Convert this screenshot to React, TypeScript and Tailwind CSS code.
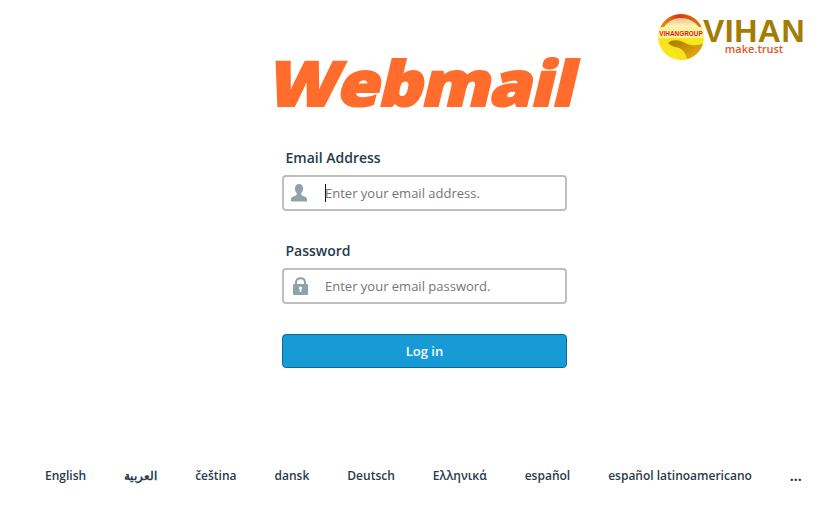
const languages = [
  "English",
  "العربية",
  "čeština",
  "dansk",
  "Deutsch",
  "Ελληνικά",
  "español",
  "español latinoamericano",
];

const UserIcon = () => (
  <svg width="16" height="18" viewBox="0 0 16 18" fill="currentColor" className="ml-[7px]">
    <path d="M8 0C10.600 0 12 1.800 12 4.500C12 6.500 11.200 8.200 10.300 9.200V10.800C10.300 11.500 13.500 12.300 15 13.200C15.700 13.600 16 14.300 16 15V17.500H0V15C0 14.300 0.300 13.600 1 13.200C2.500 12.300 5.700 11.500 5.700 10.800V9.200C4.800 8.200 4 6.500 4 4.500C4 1.800 5.400 0 8 0Z" />
  </svg>
);

const LockIcon = () => (
  <svg width="15" height="18" viewBox="0 0 15 18" className="ml-[9px]">
    <path d="M3 8V5.500C3 2.800 5 1.200 7.500 1.200C10 1.200 12 2.800 12 5.500V8" fill="none" stroke="currentColor" strokeWidth="2" />
    <rect x="0" y="7" width="15" height="11" rx="1" fill="currentColor" />
    <circle cx="7.500" cy="11" r="1.600" fill="#fff" />
    <rect x="6.700" y="11" width="1.600" height="4" fill="#fff" />
  </svg>
);

const VihanLogo = () => (
  <div className="absolute left-[658px] top-[14px] flex h-[46px] w-[150px] items-start">
    <svg width="46" height="46" viewBox="0 0 46 46" className="shrink-0">
      <defs>
        <linearGradient id="arc" x1="0" y1="0" x2="1" y2="0">
          <stop offset="0" stopColor="#e6a41c" />
          <stop offset="0.45" stopColor="#dc3514" />
          <stop offset="1" stopColor="#c98a10" />
        </linearGradient>
        <linearGradient id="cream" x1="0" y1="0" x2="0" y2="1">
          <stop offset="0" stopColor="#f0c08a" />
          <stop offset="1" stopColor="#fdf6c0" />
        </linearGradient>
        <linearGradient id="gold" x1="0" y1="0" x2="1" y2="1">
          <stop offset="0" stopColor="#a87a08" />
          <stop offset="0.6" stopColor="#d69a0c" />
          <stop offset="1" stopColor="#f0c414" />
        </linearGradient>
        <clipPath id="disc">
          <circle cx="23" cy="23" r="23" />
        </clipPath>
      </defs>
      <g clipPath="url(#disc)">
        <rect width="46" height="46" fill="#f8e71c" />
        <rect width="46" height="14" fill="url(#arc)" />
        <path d="M6 13C11 6 17 4 23 4C30 4 36 7 41 13Z" fill="url(#cream)" />
        <rect y="13" width="46" height="11" fill="#fdf39a" />
        <path d="M0 29C6 24 16 23 23 26C30 29 36 33 46 30V34C44 40 38 46 30 46H20C19 38 12 32 0 29Z" fill="#f8e21c" />
        <path d="M10 29C16 24 24 27 29 30C34 32 40 32 46 29C45 39 38 45 29 46C28 38 24 34 17 33C14 32 12 31 10 29Z" fill="url(#gold)" />
      </g>
      <text x="23" y="21.500" textAnchor="middle" fontFamily="Liberation Sans" fontWeight="700" fontSize="6.400" fill="#e0201c">
        VIHANGROUP
      </text>
    </svg>
    <div className="ml-[-1px] flex flex-col items-center">
      <span className="mt-[4px] whitespace-nowrap font-['Liberation_Sans',sans-serif] text-[32px] leading-[26px] font-bold tracking-[0.5px] text-[#a47c05]">
        VIHAN
      </span>
      <span className="font-['Open_Sans',sans-serif] text-[11px] leading-[10px] font-semibold text-[#e2571e]">
        make.trust
      </span>
    </div>
  </div>
);

const Field = ({
  label,
  placeholder,
  icon,
  caret,
}: {
  label: string;
  placeholder: string;
  icon: React.ReactNode;
  caret?: boolean;
}) => (
  <div className="flex flex-col">
    <label className="ml-[3.5px] h-[19px] text-[14px] leading-[19px] font-semibold text-[#293a4a]">
      {label}
    </label>
    <div className="mt-[8px] flex h-[36px] items-center rounded-[4px] border-2 border-[#bfbfbf] bg-white">
      <span className="flex w-[41px] shrink-0 text-[#8fa2aa]">{icon}</span>
      {caret && <span className="mr-[-1px] h-[18px] w-px bg-[#111]" />}
      <span className="pt-[1px] text-[13px] text-[#757575]">{placeholder}</span>
    </div>
  </div>
);

export default function App() {
  return (
    <div className="relative h-[509px] w-[833px] overflow-hidden bg-white font-['Open_Sans',sans-serif]">
      <VihanLogo />
      <div className="flex flex-col items-center pt-[37px] pl-[16px]">
        <div className="ml-[-1px] flex h-[90px] items-center">
          <span className="inline-block -skew-x-[12deg] scale-x-[1.11] text-[62px] leading-[90px] font-extrabold tracking-[-1px] text-[#ff6c2c] [-webkit-text-stroke:2px_#ff6c2c]">
            Webmail
          </span>
        </div>
        <form className="mt-[21px] flex w-[285px] flex-col">
          <Field label="Email Address" placeholder="Enter your email address." icon={<UserIcon />} caret />
          <div className="mt-[30px]">
            <Field label="Password" placeholder="Enter your email password." icon={<LockIcon />} />
          </div>
          <button
            type="button"
            className="mt-[30px] h-[34px] rounded-[4px] border border-[#0b6a94] bg-[#179bd7] pt-[1px] text-[13px] font-semibold text-white"
          >
            Log in
          </button>
        </form>
      </div>
      <div className="absolute bottom-[24px] left-[45px] flex items-center gap-[38px] text-[12px] leading-[18px] font-semibold text-[#293a4a]">
        {languages.map((name) => (
          <span key={name} className="whitespace-nowrap">
            {name}
          </span>
        ))}
        <span className="text-[14px] font-bold">...</span>
      </div>
    </div>
  );
}
